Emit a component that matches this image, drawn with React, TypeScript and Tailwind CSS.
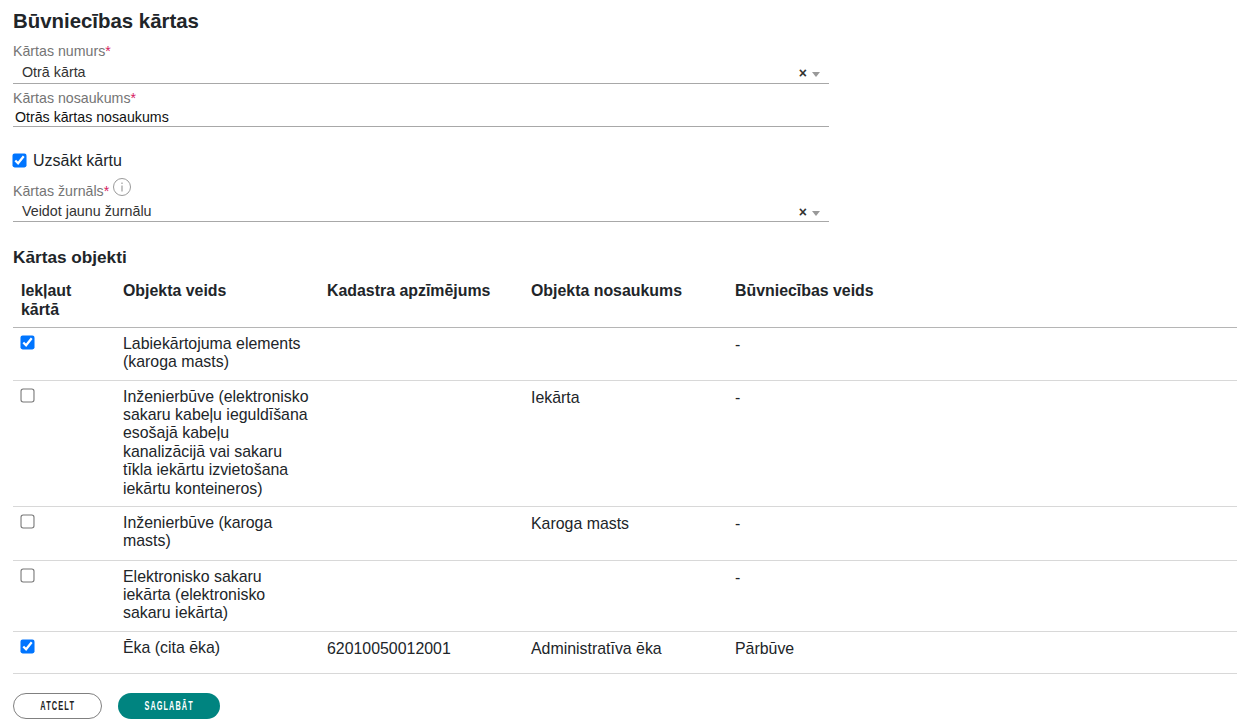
const FONT = "font-['Liberation_Sans',Arial,sans-serif]"

interface ObjectRow {
  include: boolean
  type: string[]
  cadastre?: string
  name?: string
  construction: string
  rowClass: string
}

const ROWS: ObjectRow[] = [
  {
    include: true,
    type: ["Labiekārtojuma elements", "(karoga masts)"],
    construction: "-",
    rowClass: "h-[53px]",
  },
  {
    include: false,
    type: [
      "Inženierbūve (elektronisko",
      "sakaru kabeļu ieguldīšana",
      "esošajā kabeļu",
      "kanalizācijā vai sakaru",
      "tīkla iekārtu izvietošana",
      "iekārtu konteineros)",
    ],
    name: "Iekārta",
    construction: "-",
    rowClass: "h-[126px]",
  },
  {
    include: false,
    type: ["Inženierbūve (karoga", "masts)"],
    name: "Karoga masts",
    construction: "-",
    rowClass: "h-[54px]",
  },
  {
    include: false,
    type: ["Elektronisko sakaru", "iekārta (elektronisko", "sakaru iekārta)"],
    construction: "-",
    rowClass: "h-[71px]",
  },
  {
    include: true,
    type: ["Ēka (cita ēka)"],
    cadastre: "62010050012001",
    name: "Administratīva ēka",
    construction: "Pārbūve",
    rowClass: "h-[42px]",
  },
]

function Label({ text, info }: { text: string; info?: boolean }) {
  return (
    <div className="flex h-[19px] items-center text-[14.2px] leading-[19px] text-[#757575]">
      <span>{text}</span>
      <span className="text-[#d6225f]">*</span>
      {info ? (
        <svg width="20" height="20" viewBox="0 0 20 20" className="relative -top-[5px] ml-[3px]" aria-hidden="true">
          <circle cx="10" cy="10" r="8.5" fill="none" stroke="#9a9a9a" strokeWidth="1" />
          <rect x="9.5" y="8.5" width="1" height="6" fill="#8a8a8a" />
          <rect x="9.5" y="5.5" width="1" height="1.5" fill="#8a8a8a" />
        </svg>
      ) : null}
    </div>
  )
}

function SelectField({ value, tall }: { value: string; tall?: boolean }) {
  return (
    <div
      className={`flex ${tall ? "h-[23px]" : "h-[21px]"} w-[816px] items-center border-b border-[#a8a8a8] pl-[9px] pr-[9px] pt-[2px] text-[14.3px] text-[#333333]`}
    >
      <span className="flex-1">{value}</span>
      <span className="text-[14px] font-bold leading-none text-[#333333]">×</span>
      <span className="ml-[5px] mt-[2px] h-0 w-0 border-x-[4px] border-t-[5px] border-x-transparent border-t-[#999999]" />
    </div>
  )
}

function Check({ checked }: { checked: boolean }) {
  return <input type="checkbox" defaultChecked={checked} className="m-0 block h-[13px] w-[13px] scale-[1.08] accent-[#0075ff]" />
}

export default function App() {
  return (
    <div className={`${FONT} h-[724px] w-[1244px] overflow-hidden bg-white pl-[13px] text-[#212529]`}>
      <h1 className="pt-[9px] text-[20.4px] font-bold leading-[24px]">Būvniecības kārtas</h1>

      <div className="mt-[9px]">
        <Label text="Kārtas numurs" />
        <SelectField value="Otrā kārta" tall />
      </div>

      <div className="mt-[5px]">
        <Label text="Kārtas nosaukums" />
        <div className="flex h-[19px] w-[816px] items-center border-b border-[#a8a8a8] pl-[2px] pt-[2px] text-[14.2px] text-[#111111]">
          Otrās kārtas nosaukums
        </div>
      </div>

      <label className="mt-[24px] flex h-[19px] items-center gap-[7px] text-[16px] leading-[19px]">
        <Check checked />
        Uzsākt kārtu
      </label>

      <div className="mt-[12px]">
        <Label text="Kārtas žurnāls" info />
        <SelectField value="Veidot jaunu žurnālu" />
      </div>

      <h2 className="mt-[26px] text-[17.2px] font-bold leading-[19px]">Kārtas objekti</h2>

      <table className="mt-[6px] w-[1224px] table-fixed border-collapse text-[15.9px] leading-[18.4px]">
        <colgroup>
          <col className="w-[102px]" />
          <col className="w-[204px]" />
          <col className="w-[204px]" />
          <col className="w-[204px]" />
          <col className="w-[204px]" />
          <col />
        </colgroup>
        <thead>
          <tr className="h-[54px] border-b border-[#b5b5b5] align-top font-bold leading-[19px]">
            <th className="px-[8px] pt-[8px] text-left">Iekļaut kārtā</th>
            <th className="px-[8px] pt-[8px] text-left">Objekta veids</th>
            <th className="px-[8px] pt-[8px] text-left">Kadastra apzīmējums</th>
            <th className="px-[8px] pt-[8px] text-left">Objekta nosaukums</th>
            <th className="px-[8px] pt-[8px] text-left">Būvniecības veids</th>
            <th />
          </tr>
        </thead>
        <tbody>
          {ROWS.map((row) => (
            <tr key={row.type[0]} className={`${row.rowClass} border-b border-[#d8d8d8] align-top`}>
              <td className="px-[8px] pt-[8px]">
                <Check checked={row.include} />
              </td>
              <td className="px-[8px] pt-[7px]">
                {row.type.map((line) => (
                  <div key={line}>{line}</div>
                ))}
              </td>
              <td className="px-[8px] pt-[8px]">{row.cadastre}</td>
              <td className="px-[8px] pt-[8px]">{row.name}</td>
              <td className="px-[8px] pt-[8px]">{row.construction}</td>
              <td />
            </tr>
          ))}
        </tbody>
      </table>

      <div className="mt-[19px] flex gap-[16px]">
        <button
          type="button"
          className="flex h-[26px] w-[89px] items-center justify-center rounded-full border border-[#808080] bg-white text-[13px] font-bold tracking-[2px] text-[#222222]"
        >
          {/* the original face is a condensed display font, squeezed here */}
          <span className="inline-block scale-x-[0.57]">ATCELT</span>
        </button>
        <button
          type="button"
          className="flex h-[26px] w-[102px] items-center justify-center rounded-full bg-[#008480] text-[13px] font-bold tracking-[2px] text-white"
        >
          <span className="inline-block scale-x-[0.56]">SAGLABĀT</span>
        </button>
      </div>
    </div>
  )
}
